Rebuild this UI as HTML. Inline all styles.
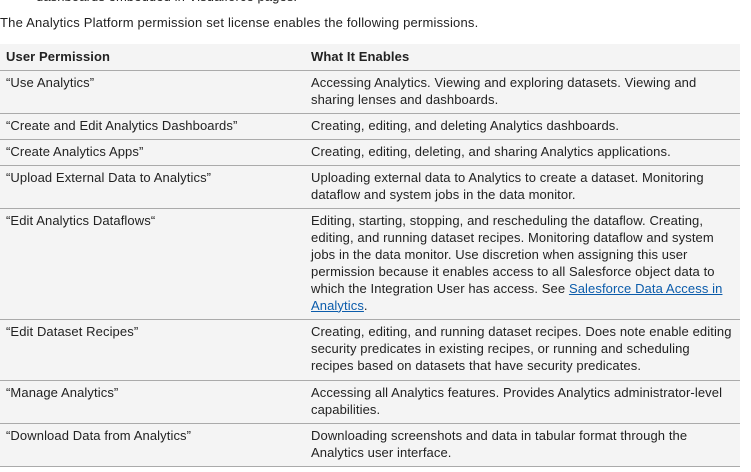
<!DOCTYPE html>
<html><head><style>
body{margin:0;background:#fff;font-family:"Liberation Sans",sans-serif;font-size:13px;letter-spacing:0.1px;color:#222;width:751px;height:472px;overflow:hidden;position:relative}
.top{position:absolute;left:36px;top:-11px;line-height:16px}
.intro{position:absolute;left:0;top:14px;line-height:17px;letter-spacing:0.2px}
table{position:absolute;left:0;top:44px;width:740px;border-collapse:collapse;background:#f4f4f4;table-layout:fixed}
td,th{vertical-align:top;text-align:left;padding:3px 8px 4px 6px;line-height:17px;border-bottom:1.5px solid #aaa}
th{font-weight:bold;padding:4px 6px 4px}
td:first-child,th:first-child{width:293px}
a{color:#0b5cab;text-decoration:underline}
</style></head><body>
<div class="top">dashboards embedded in Visualforce pages.</div>
<div class="intro">The Analytics Platform permission set license enables the following permissions.</div>
<table>
<tr style="height:26px"><th>User Permission</th><th>What It Enables</th></tr>
<tr style="height:43px"><td>“Use Analytics”</td><td>Accessing Analytics. Viewing and exploring datasets. Viewing and sharing lenses and dashboards.</td></tr>
<tr style="height:26px"><td>“Create and Edit Analytics Dashboards”</td><td>Creating, editing, and deleting Analytics dashboards.</td></tr>
<tr style="height:26px"><td>“Create Analytics Apps”</td><td>Creating, editing, deleting, and sharing Analytics applications.</td></tr>
<tr style="height:43px"><td>“Upload External Data to Analytics”</td><td>Uploading external data to Analytics to create a dataset. Monitoring dataflow and system jobs in the data monitor.</td></tr>
<tr style="height:111px"><td>“Edit Analytics Dataflows“</td><td>Editing, starting, stopping, and rescheduling the dataflow. Creating, editing, and running dataset recipes. Monitoring dataflow and system jobs in the data monitor. Use discretion when assigning this user permission because it enables access to all Salesforce object data to which the Integration User has access. See <a>Salesforce Data Access in Analytics</a>.</td></tr>
<tr style="height:61px"><td>“Edit Dataset Recipes”</td><td>Creating, editing, and running dataset recipes. Does note enable editing security predicates in existing recipes, or running and scheduling recipes based on datasets that have security predicates.</td></tr>
<tr style="height:43px"><td>“Manage Analytics”</td><td>Accessing all Analytics features. Provides Analytics administrator-level capabilities.</td></tr>
<tr style="height:43px"><td>“Download Data from Analytics”</td><td>Downloading screenshots and data in tabular format through the Analytics user interface.</td></tr>
</table>
</body></html>
